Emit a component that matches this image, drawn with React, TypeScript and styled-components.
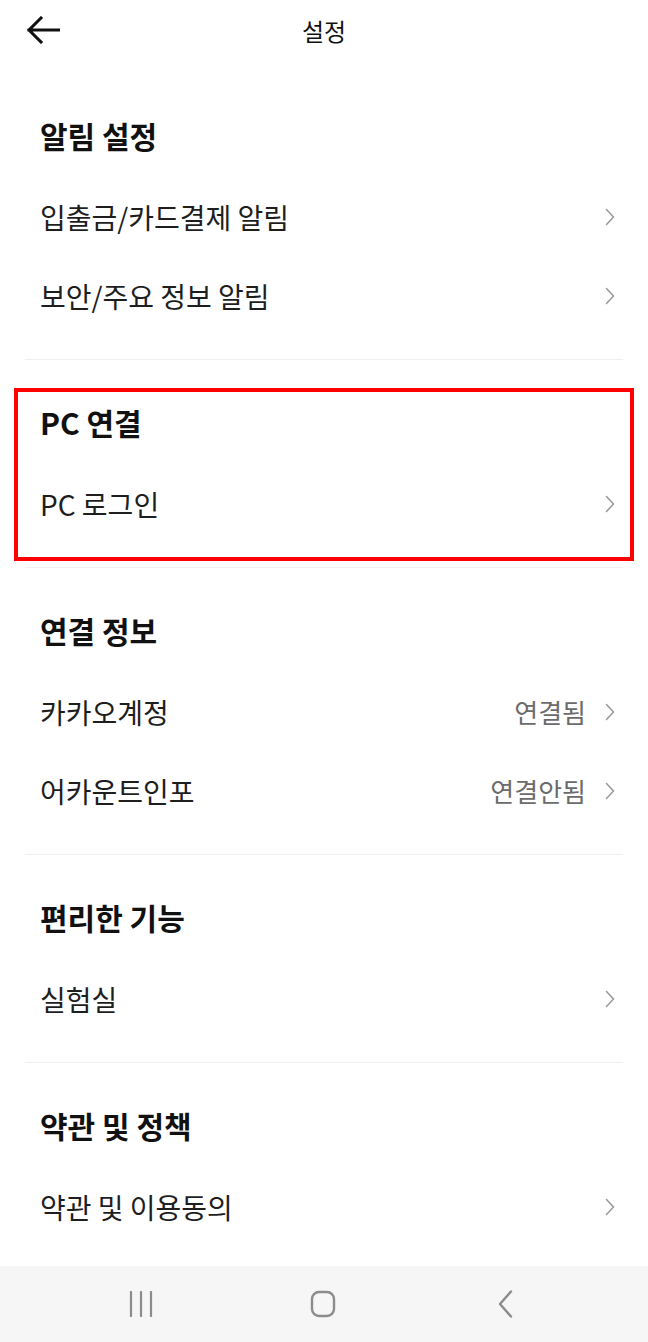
import React from "react";
import styled, { createGlobalStyle } from "styled-components";

const GlobalStyle = createGlobalStyle`
  html, body { margin: 0; padding: 0; background: #ffffff; }
  body { font-family: "Noto Sans CJK KR", "Noto Sans", sans-serif; }
  * { box-sizing: border-box; }
`;

const Screen = styled.div`
  height: 100vh;
  overflow: hidden;
  display: flex;
  flex-direction: column;
  background: #ffffff;
`;

const Header = styled.header`
  flex: none;
  height: 60px;
  display: grid;
  grid-template-columns: 1fr auto 1fr;
  align-items: center;
  padding: 0 26px;
`;

const BackButton = styled.button`
  justify-self: start;
  width: 36px;
  height: 30px;
  padding: 0;
  border: none;
  background: none;
  display: flex;
  align-items: center;
`;

const Title = styled.h1`
  margin: 0;
  font-size: 24px;
  font-weight: 400;
  color: #111111;
`;

const Main = styled.main`
  flex: 1;
  min-height: 0;
  overflow: hidden;
  padding-top: 13px;
  display: flex;
  flex-direction: column;
`;

const Section = styled.section`
  flex: none;
  position: relative;
  padding: 20px 0 24px;
  display: flex;
  flex-direction: column;
`;

const SectionTitle = styled.h2`
  margin: 0;
  height: 84px;
  display: flex;
  align-items: center;
  padding: 0 40px;
  font-size: 30px;
  font-weight: 700;
  color: #111111;
`;

const Row = styled.div`
  height: 79px;
  display: flex;
  align-items: center;
  padding: 0 33px 0 40px;
  gap: 19px;
`;

const RowLabel = styled.span`
  flex: 1;
  font-size: 28px;
  color: #1e1e1e;
`;

const RowValue = styled.span`
  font-size: 26px;
  color: #6b6b6b;
`;

const Divider = styled.hr`
  flex: none;
  margin: 0 25px;
  border: none;
  height: 1px;
  background: #f0f0f0;
`;

const Highlight = styled.div`
  position: absolute;
  top: 28px;
  left: 14px;
  width: 620px;
  height: 173px;
  border: 4px solid #ff0000;
  pointer-events: none;
`;

const NavBar = styled.nav`
  flex: none;
  height: 76px;
  background: #f6f6f6;
  display: flex;
  align-items: center;
  justify-content: center;
  gap: 122px;
  padding-right: 2px;
`;

const NavIcon = styled.div`
  width: 60px;
  height: 30px;
  display: flex;
  align-items: center;
  justify-content: center;
`;

const Chevron = () => (
  <svg width="10" height="18" viewBox="0 0 10 18" fill="none">
    <path d="M1.5 1.5 L8.5 9 L1.5 16.5" stroke="#9a9a9a" strokeWidth="1.6" strokeLinecap="round" strokeLinejoin="round" />
  </svg>
);

type Item = { label: string; value?: string };
type Group = { title: string; items: Item[]; highlight?: boolean };

const groups: Group[] = [
  { title: "알림 설정", items: [{ label: "입출금/카드결제 알림" }, { label: "보안/주요 정보 알림" }] },
  { title: "PC 연결", items: [{ label: "PC 로그인" }], highlight: true },
  {
    title: "연결 정보",
    items: [
      { label: "카카오계정", value: "연결됨" },
      { label: "어카운트인포", value: "연결안됨" },
    ],
  },
  { title: "편리한 기능", items: [{ label: "실험실" }] },
  { title: "약관 및 정책", items: [{ label: "약관 및 이용동의" }] },
];

export default function App() {
  return (
    <>
      <GlobalStyle />
      <Screen>
        <Header>
          <BackButton aria-label="뒤로">
            <svg width="34" height="28" viewBox="0 0 34 28" fill="none">
              <path d="M3 14 H33 M15 2 L3 14 L15 26" stroke="#111" strokeWidth="3" strokeLinecap="square" strokeLinejoin="miter" />
            </svg>
          </BackButton>
          <Title>설정</Title>
          <span />
        </Header>
        <Main>
          {groups.map((g, gi) => (
            <React.Fragment key={g.title}>
              <Section>
                <SectionTitle>{g.title}</SectionTitle>
                {g.items.map((it) => (
                  <Row key={it.label}>
                    <RowLabel>{it.label}</RowLabel>
                    {it.value && <RowValue>{it.value}</RowValue>}
                    <Chevron />
                  </Row>
                ))}
                {g.highlight && <Highlight />}
              </Section>
              {gi < groups.length - 1 && <Divider />}
            </React.Fragment>
          ))}
        </Main>
        <NavBar>
          <NavIcon>
            <svg width="26" height="26" viewBox="0 0 26 26" fill="none">
              <path d="M3 1 V25 M13 1 V25 M23 1 V25" stroke="#8c8c8c" strokeWidth="2.2" strokeLinecap="round" />
            </svg>
          </NavIcon>
          <NavIcon>
            <svg width="26" height="28" viewBox="0 0 26 28" fill="none">
              <rect x="2" y="2" width="22" height="24" rx="7" stroke="#8c8c8c" strokeWidth="2.4" />
            </svg>
          </NavIcon>
          <NavIcon>
            <svg width="16" height="28" viewBox="0 0 16 28" fill="none">
              <path d="M14 1.5 L3 14 L14 26.5" stroke="#8c8c8c" strokeWidth="2.4" strokeLinecap="round" strokeLinejoin="round" />
            </svg>
          </NavIcon>
        </NavBar>
      </Screen>
    </>
  );
}
